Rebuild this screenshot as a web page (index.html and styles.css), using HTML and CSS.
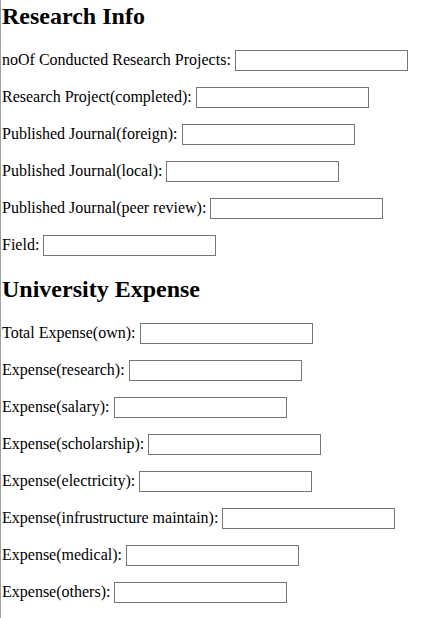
FILE: index.html
```html
<!DOCTYPE html>
<html>
<head>
<meta charset="utf-8">
<title>Research Info</title>
<link rel="stylesheet" href="styles.css">
</head>
<body>
<div class="page">
  <h2 class="title first">Research Info</h2>
  <p class="row">noOf Conducted Research Projects: <input class="field" type="text"></p>
  <p class="row">Research Project(completed): <input class="field" type="text"></p>
  <p class="row">Published Journal(foreign): <input class="field" type="text"></p>
  <p class="row">Published Journal(local): <input class="field" type="text"></p>
  <p class="row">Published Journal(peer review): <input class="field" type="text"></p>
  <p class="row">Field: <input class="field" type="text"></p>
  <h2 class="title">University Expense</h2>
  <p class="row">Total Expense(own): <input class="field" type="text"></p>
  <p class="row">Expense(research): <input class="field" type="text"></p>
  <p class="row">Expense(salary): <input class="field" type="text"></p>
  <p class="row">Expense(scholarship): <input class="field" type="text"></p>
  <p class="row">Expense(electricity): <input class="field" type="text"></p>
  <p class="row">Expense(infrustructure maintain): <input class="field" type="text"></p>
  <p class="row">Expense(medical): <input class="field" type="text"></p>
  <p class="row">Expense(others): <input class="field" type="text"></p>
</div>
</body>
</html>
```
FILE: styles.css
```css
html, body {
  margin: 0;
  padding: 0;
  background: #ffffff;
  height: 100%;
  overflow: hidden;
}
.page {
  font-family: "Liberation Serif", "Times New Roman", serif;
  font-size: 16px;
  color: #000;
  border-left: 1px solid #a0a0a0;
  padding-left: 1px;
  min-height: 100%;
  box-sizing: border-box;
  overflow: hidden;
}
.title {
  font-size: 24px;
  font-weight: bold;
  margin: 19.92px 0;
}
.title.first {
  margin-top: 3px;
}
.row {
  margin: 16px 0;
}
.field {
  box-sizing: border-box;
  width: 173px;
  height: 21px;
  border: 1px solid #767676;
  padding: 1px 2px;
  margin: 0;
  font-family: "Liberation Sans", Arial, sans-serif;
  font-size: 13.33px;
  vertical-align: baseline;
  background: #fff;
}
```
